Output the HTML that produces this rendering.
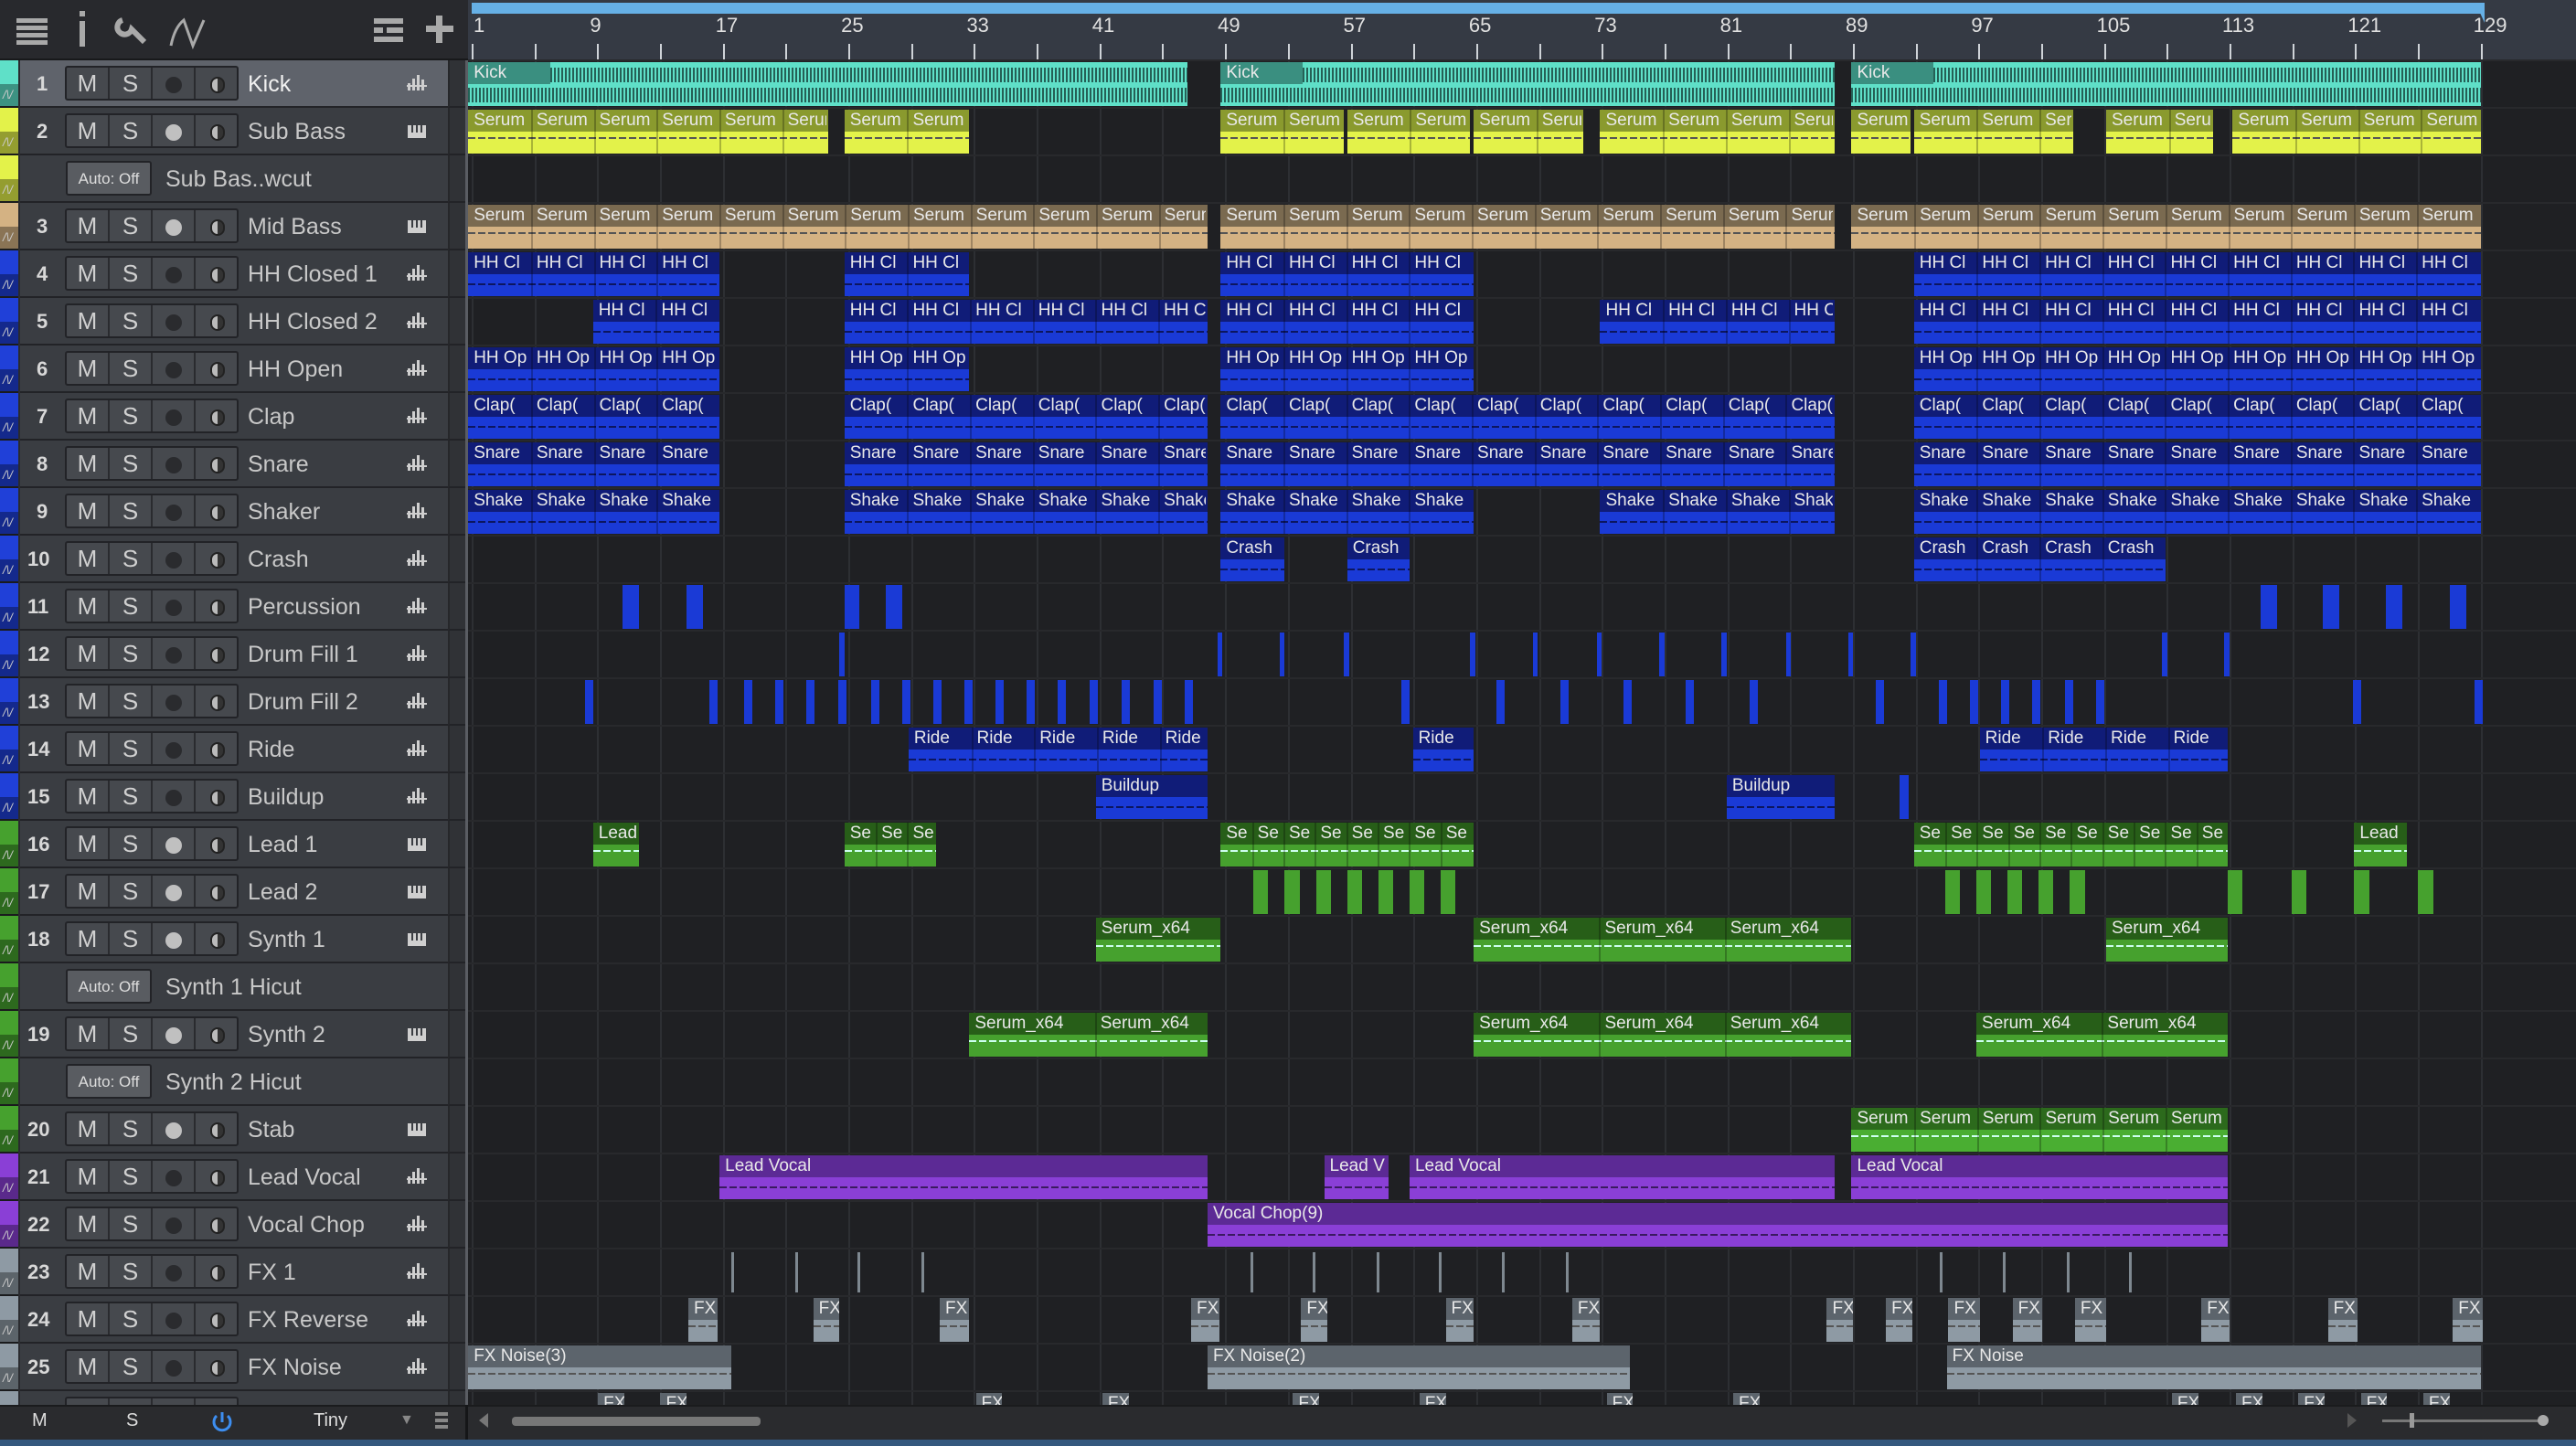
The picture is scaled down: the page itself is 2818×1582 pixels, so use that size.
<!DOCTYPE html>
<html><head><meta charset="utf-8"><style>
*{box-sizing:border-box;margin:0;padding:0}
body{width:2818px;height:1582px;background:#1f2023;overflow:hidden;position:relative;font-family:"Liberation Sans",sans-serif}
.a{position:absolute}
.clip{position:absolute;overflow:hidden}
.hd{position:absolute;left:0;top:0;right:0;color:#e8e8e8;font-size:19px;line-height:24px;padding-left:6px;white-space:nowrap;overflow:hidden}
.btn{position:absolute;top:7px;height:38px;background:#46494e;border:2px solid #222327;border-radius:3px}
.cell{position:absolute;top:0;height:34px;width:47px;border-right:2px solid #2a2b2f;color:#d0d0d0;font-size:26px;text-align:center;line-height:34px}
</style></head><body>
<div class="a" style="left:0;top:0;width:512px;height:66px;background:#28292d;border-bottom:2px solid #18191b"></div>
<div class="a" style="left:512px;top:0;width:2306px;height:66px;background:#353a44"></div>
<div class="a" style="left:516px;top:3px;width:2198px;height:12px;background:#66b0e6"></div>
<div class="a" style="left:0;top:66px;width:512px;height:1471px;background:#2a2b2f"></div>
<div class="a" style="left:509px;top:66px;width:3px;height:1471px;background:#5a5d63"></div>
<svg class="a" style="left:0;top:0" width="512" height="66">
<g fill="#a9a9a9"><rect x="18" y="20" width="34" height="5"/><rect x="18" y="28" width="34" height="5"/><rect x="18" y="36" width="34" height="5"/><rect x="18" y="44" width="34" height="5"/>
<rect x="87" y="12" width="6" height="6"/><rect x="87" y="23" width="6" height="28"/>
<rect x="409" y="20" width="32" height="6"/><rect x="409" y="30" width="10" height="6"/><rect x="423" y="30" width="18" height="6"/><rect x="409" y="40" width="32" height="6"/>
<rect x="466" y="28" width="30" height="7"/><rect x="477" y="17" width="7" height="30"/></g>
<path d="M134 22 a8 8 0 1 0 10 10 l14 14" stroke="#a9a9a9" stroke-width="6" fill="none"/>
<path d="M187 50 q4 -20 14 -28 l10 28 l12 -28" stroke="#a9a9a9" stroke-width="3" fill="none"/>
</svg>
<div id="r"></div>
<script>
const S=1.7972,R=52,T=66,X=x=>x*S;
const bx=b=>516+(b-1)*17.17;
let h='';
for(let b=1;b<=129;b+=4){h+=`<div class="a" style="left:${bx(b)}px;top:66px;width:2px;height:1471px;background:#2d2f33"></div>`;
h+=`<div class="a" style="left:${bx(b)}px;top:48px;width:2px;height:18px;background:#cfd3d8"></div>`;
if((b-1)%8==0)h+=`<div class="a" style="left:${bx(b)+(b==1?2:-8)}px;top:15px;color:#e0e0e0;font-size:22px">${b}</div>`;}
for(let i=0;i<=29;i++)h+=`<div class="a" style="left:512px;top:${T+i*R-1}px;width:2306px;height:2px;background:#28292c"></div>`;
const tracks=[['Kick','#5fe0c8','a',1],['Sub Bass','#e3f24a','m'],['Sub Bas..wcut','#e3f24a','auto'],['Mid Bass','#d4b283','m'],['HH Closed 1','#2040d8','a'],['HH Closed 2','#2040d8','a'],['HH Open','#2040d8','a'],['Clap','#2040d8','a'],['Snare','#2040d8','a'],['Shaker','#2040d8','a'],['Crash','#2040d8','a'],['Percussion','#2040d8','a'],['Drum Fill 1','#2040d8','a'],['Drum Fill 2','#2040d8','a'],['Ride','#2040d8','a'],['Buildup','#2040d8','a'],['Lead 1','#46a12e','m'],['Lead 2','#46a12e','m'],['Synth 1','#46a12e','m'],['Synth 1 Hicut','#46a12e','auto'],['Synth 2','#46a12e','m'],['Synth 2 Hicut','#46a12e','auto'],['Stab','#46a12e','m'],['Lead Vocal','#8a3fd6','a'],['Vocal Chop','#8a3fd6','a'],['FX 1','#8e9aa4','a'],['FX Reverse','#8e9aa4','a'],['FX Noise','#8e9aa4','a'],['','#8e9aa4','a']];
const wav='<svg width="22" height="20"><g fill="#cfcfcf"><rect x="1" y="9" width="3" height="8"/><rect x="6" y="4" width="3" height="13"/><rect x="11" y="0" width="3" height="17"/><rect x="16" y="5" width="3" height="12"/><rect x="0" y="11" width="22" height="2"/></g></svg>';
const pno='<svg width="22" height="20"><rect x="1" y="3" width="20" height="14" fill="#cfcfcf"/><g fill="#3a3d42"><rect x="5" y="3" width="2" height="8"/><rect x="10" y="3" width="2" height="8"/><rect x="15" y="3" width="2" height="8"/></g></svg>';
let n=0;
tracks.forEach((t,i)=>{const y=T+i*R;
h+=`<div class="a" style="left:0;top:${y}px;width:20px;height:${R}px;background:${t[1]};border-bottom:2px solid #1a1b1d"></div><div class="a" style="left:0;top:${y+26}px;width:20px;height:24px;background:rgba(0,0,0,.35);color:#ccc;font-size:13px;font-style:italic;line-height:24px;padding-left:3px">/\\/</div>`;
h+=`<div class="a" style="left:22px;top:${y}px;width:468px;height:${R}px;background:${t[3]?'#5f636b':'#3a3d42'};border-bottom:2px solid #222327"></div>`;
h+=`<div class="a" style="left:490px;top:${y}px;width:19px;height:${R}px;background:#303236;border-bottom:2px solid #222327;border-left:2px solid #26272a"></div>`;
if(t[2]=='auto'){h+=`<div class="btn" style="left:72px;top:${y+6}px;width:94px;background:#595c61"><div style="color:#ddd;font-size:17px;line-height:36px;text-align:center">Auto: Off</div></div><div class="a" style="left:181px;top:${y+12}px;color:#c8c8c8;font-size:25px">${t[0]}</div>`;return;}
n++;
const rec=t[2]=='m'?'#c0c0c0':'#2a2b2e';
h+=`<div class="a" style="left:${n>9?30:40}px;top:${y+13}px;color:#d8d8d8;font-size:22px;font-weight:bold">${n}</div>`;
h+=`<div class="btn" style="left:71px;top:${y+6}px;width:190px"><div class="cell" style="left:0">M</div><div class="cell" style="left:47px">S</div><div class="cell" style="left:94px"><span style="display:inline-block;width:18px;height:18px;border-radius:9px;background:${rec};vertical-align:middle"></span></div><div class="cell" style="left:141px;border:0"><span style="display:inline-block;width:16px;height:18px;border-radius:9px;border:2px solid #222;background:linear-gradient(90deg,#bbb 50%,#333 50%);vertical-align:middle"></span></div></div>`;
h+=`<div class="a" style="left:271px;top:${y+12}px;color:${t[3]?'#f0f0f0':'#c8c8c8'};font-size:25px">${t[0]}</div>`;
h+=`<div class="a" style="left:445px;top:${y+16}px">${t[2]=='m'?pno:wav}</div>`;
});
const C={teal:['#5fe0c8','#3a8f80','#256056'],yel:['#e3f24a','#8a9a2e','#555'],tan:['#d4b283','#7a6a50','#555'],blu:['#1a3ad6','#101c78','#0c1660'],grn:['#46a12e','#275e18','#cfe'],lg:['#4aae32','#2c6a1c','#cfe'],pur:['#8a3fd6','#5c2a95','#3a1a60'],gry:['#8e9aa4','#5c646c','#555']};
function clip(row,x1,x2,c,lab,split){const y=T+row*R+2,l=X(x1),w=X(x2)-X(x1),cc=C[c];const sp=split?17.17*split:0;
let s=`<div class="clip" style="left:${l}px;top:${y}px;width:${w}px;height:${R-4}px;background:${cc[0]}">`;
if(lab!==null)s+=`<div class="hd" style="height:24px;background:${cc[1]};${c=='teal'?'width:'+Math.min(w,90)+'px;right:auto':''}">${lab}</div>`;
if(c=='teal')s+=`<div class="a" style="left:90px;right:0;top:6px;height:16px;background:repeating-linear-gradient(90deg,${cc[2]} 0 2px,transparent 2px 4px)"></div><div class="a" style="left:0;right:0;top:28px;height:16px;background:repeating-linear-gradient(90deg,${cc[2]} 0 2px,transparent 2px 4px)"></div>`;
else if(lab!==null) s+=`<div class="a" style="left:0;right:0;top:${c=='blu'||c=='pur'?34:30}px;height:2px;background:repeating-linear-gradient(90deg,${cc[2]} 0 8px,transparent 8px 11px)"></div>`;
if(sp){for(let k=l+sp;k<l+w-5;k+=sp)s+=`<div class="a" style="left:${k-l}px;top:0;width:2px;height:100%;background:rgba(0,0,0,.25)"></div>`;}
s+='</div>';
if(sp&&lab){for(let k=l+sp;k<l+w-20;k+=sp)s+=`<div class="a" style="left:${k+6}px;color:#e8e8e8;font-size:19px;line-height:24px;top:${y}px;width:${Math.min(sp-8,l+w-k-8)}px;overflow:hidden;white-space:nowrap">${lab}</div>`;}
h+=s;}
[[285,723],[743,1117],[1127,1510]].forEach(a=>clip(0,a[0],a[1],'teal','Kick'));
[[285,504],[514,590],[743,818],[820,895],[897,964],[974,1117],[1127,1163],[1165,1262],[1282,1347],[1359,1510]].forEach(a=>clip(1,a[0],a[1],'yel','Serum',4));
[[285,735],[743,1117],[1127,1510]].forEach(a=>clip(3,a[0],a[1],'tan','Serum',4));
const blu=(r,arr,lab)=>arr.forEach(a=>clip(r,a[0],a[1],'blu',lab,4));
blu(4,[[285,438],[514,590],[743,897],[1165,1510]],'HH Cl');
blu(5,[[361,438],[514,735],[743,897],[974,1117],[1165,1510]],'HH Cl');
blu(6,[[285,438],[514,590],[743,897],[1165,1510]],'HH Op');
blu(7,[[285,438],[514,735],[743,1117],[1165,1510]],'Clap(');
blu(8,[[285,438],[514,735],[743,1117],[1165,1510]],'Snare');
blu(9,[[285,438],[514,735],[743,897],[974,1117],[1165,1510]],'Shake');
blu(10,[[743,782],[820,858],[1165,1318]],'Crash');
[[379,389],[418,428],[514,523],[539,549],[1376,1386],[1414,1424],[1452,1462],[1491,1501]].forEach(a=>clip(11,a[0],a[1],'blu',null));
[511,741,779,818,895,933,972,1010,1048,1087,1125,1163,1316,1354].forEach(x=>clip(12,x,x+3,'blu',null));
[356,432,453,472,491,510,530,549,568,587,606,625,644,663,683,702,721,853,911,950,988,1026,1065,1142,1180,1199,1218,1237,1257,1276,1432,1506].forEach(x=>clip(13,x,x+5,'blu',null));
blu(14,[[553,735],[860,897],[1205,1356]],'Ride');
[[667,735],[1051,1117]].forEach(a=>clip(15,a[0],a[1],'blu','Buildup'));clip(15,1156,1162,'blu',null);
clip(16,361,389,'grn','Lead');[[514,570],[743,897],[1165,1356]].forEach(a=>clip(16,a[0],a[1],'grn','Se',2));clip(16,1433,1465,'grn','Lead');
[763,782,801,820,839,858,877,1184,1203,1222,1241,1260,1356,1395,1433,1472].forEach(x=>clip(17,x,x+9,'grn',null));
const ser=(r,arr)=>arr.forEach(a=>clip(r,a[0],a[1],'grn','Serum_x64',8));
ser(18,[[667,743],[897,1127],[1282,1356]]);
ser(20,[[590,735],[897,1127],[1203,1356]]);
clip(22,1127,1356,'lg','Serum',4);
[[438,735],[806,845],[858,1117],[1127,1356]].forEach(a=>clip(23,a[0],a[1],'pur',a[0]==806?'Lead V':'Lead Vocal'));
clip(24,735,1356,'pur','Vocal Chop(9)');
[445,484,522,561,761,799,838,876,914,953,1181,1219,1258,1296].forEach(x=>h+=`<div class="a" style="left:${X(x)}px;top:${T+25*R+4}px;width:3px;height:44px;background:#7e8890"></div>`);
[[419,437],[495,511],[572,590],[725,742],[792,808],[880,897],[957,974],[1112,1128],[1148,1164],[1186,1205],[1225,1243],[1263,1282],[1340,1357],[1417,1435],[1493,1511]].forEach(a=>clip(26,a[0],a[1],'gry','FX'));
clip(27,285,445,'gry','FX Noise(3)');clip(27,735,992,'gry','FX Noise(2)');clip(27,1185,1510,'gry','FX Noise');
[364,402,594,671,787,864,978,1055,1322,1361,1399,1437,1475].forEach(x=>clip(28,x,x+16,'gry','FX'));
h+=`<div class="a" style="left:2708px;top:3px;width:0;height:0;border-top:22px solid #66b0e6;border-left:10px solid transparent"></div>`;
document.getElementById('r').innerHTML=h;
</script>
<div class="a" style="left:0;top:1537px;width:2818px;height:38px;background:#2a2b2e;border-top:2px solid #1a1b1d;z-index:5"></div>
<div class="a" style="left:0;top:1575px;width:2818px;height:7px;background:#34587e"></div>
<div class="a" style="left:35px;top:1543px;color:#ddd;font-size:20px;z-index:6">M</div>
<div class="a" style="left:138px;top:1543px;color:#ddd;font-size:20px;z-index:6">S</div>
<svg class="a" style="left:230px;top:1542px;z-index:6" width="26" height="26"><path d="M7 7 a9 9 0 1 0 12 0" stroke="#3d8ef0" stroke-width="3" fill="none"/><rect x="11.5" y="3" width="3" height="11" fill="#3d8ef0"/></svg>
<div class="a" style="left:343px;top:1543px;color:#ddd;font-size:20px;z-index:6">Tiny</div>
<div class="a" style="left:437px;top:1545px;color:#888;font-size:16px;z-index:6">▼</div>
<div class="a" style="left:476px;top:1545px;width:14px;height:4px;background:#888;box-shadow:0 7px #888,0 14px #888;z-index:6"></div>
<div class="a" style="left:509px;top:1537px;width:3px;height:38px;background:#151618;z-index:6"></div>
<div class="a" style="left:524px;top:1546px;width:0;height:0;border:8px solid transparent;border-right:10px solid #777;border-left:0;z-index:6"></div>
<div class="a" style="left:560px;top:1550px;width:272px;height:10px;background:#777;border-radius:4px;z-index:6"></div>
<div class="a" style="left:2568px;top:1546px;width:0;height:0;border:8px solid transparent;border-left:10px solid #555;border-right:0;z-index:6"></div>
<div class="a" style="left:2606px;top:1553px;width:180px;height:3px;background:#777;z-index:6"></div>
<div class="a" style="left:2636px;top:1546px;width:5px;height:16px;background:#999;z-index:6"></div>
<div class="a" style="left:2776px;top:1548px;width:12px;height:12px;border-radius:6px;background:#aaa;z-index:6"></div>
</body></html>
